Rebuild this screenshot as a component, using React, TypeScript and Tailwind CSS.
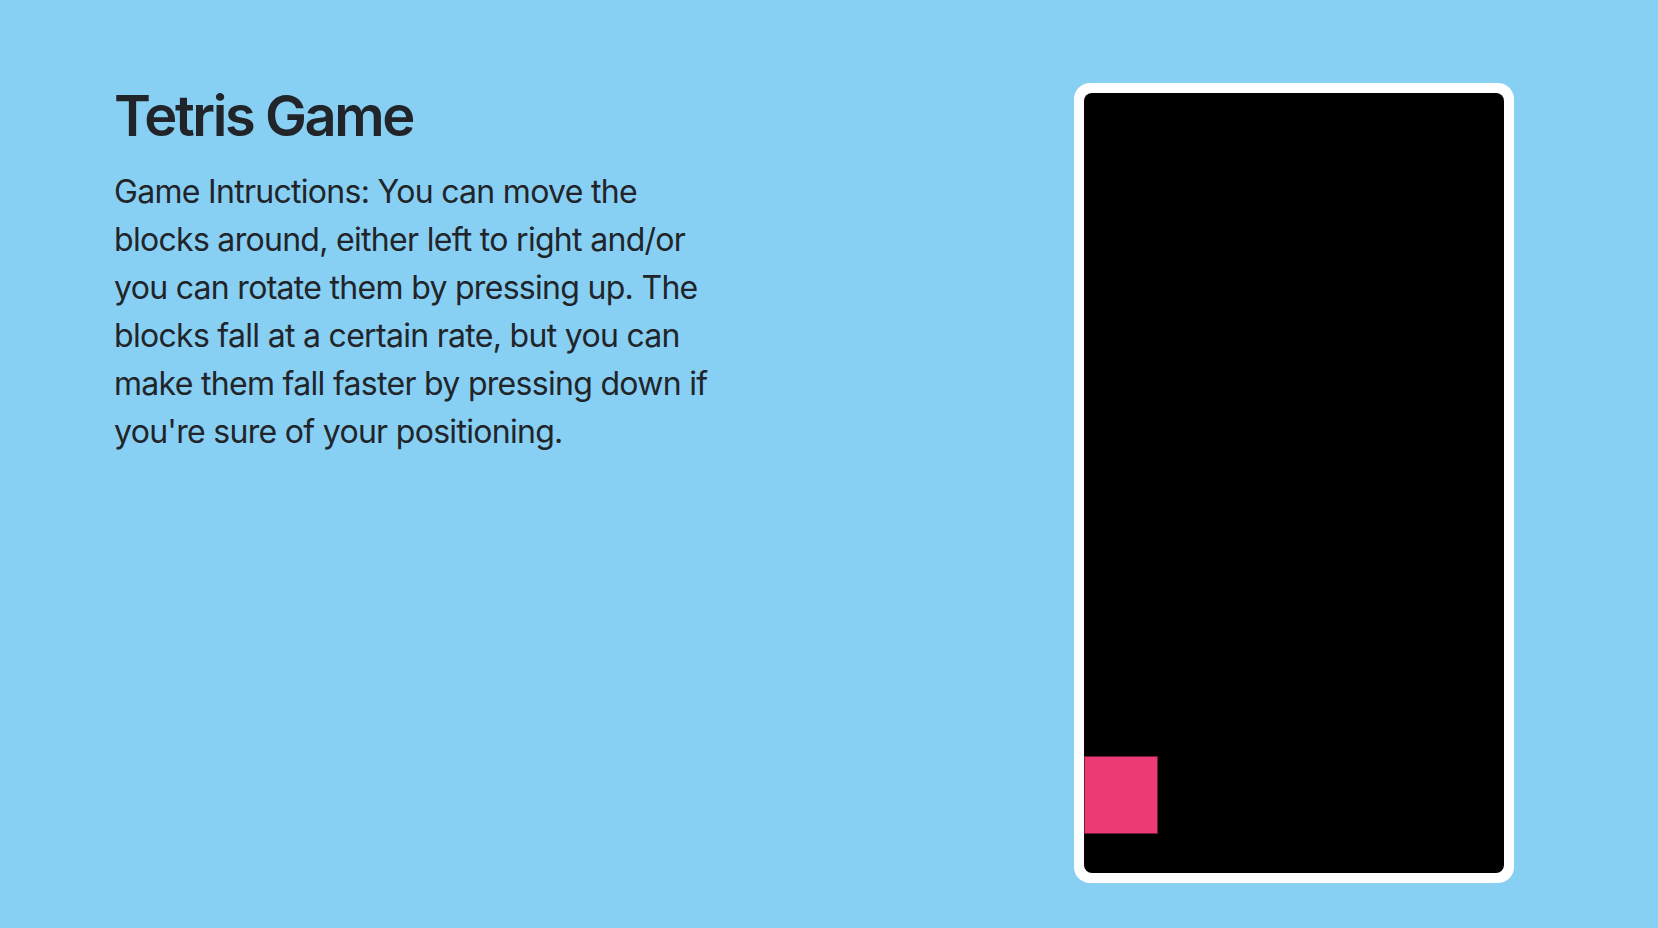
import React from 'react';

const Board = () => {
  return (
    <div className="rounded-2xl bg-white p-[10px]">
      <div className="relative h-[780px] w-[420px] overflow-hidden rounded-lg bg-black">
        {/* falling piece */}
        <div className="absolute left-0 top-[663px] h-[78px] w-[74px] border border-[#7a1d3d] bg-[#ec3a75]" />
      </div>
    </div>
  );
};

export default function App() {
  return (
    <div
      className="flex min-h-screen justify-between bg-[#88cff4] pl-[114px] pr-[144px] pt-[83px] text-[#212529]"
      style={{ fontFamily: 'Inter, "Noto Sans", sans-serif' }}
    >
      <div className="w-[600px]">
        <h1 className="mb-[18px] text-[56px] font-semibold leading-[1.2] tracking-[-2.4px]">Tetris Game</h1>
        <p className="text-[32px] leading-[48px] tracking-[-0.7px]">
          Game Intructions: You can move the blocks around, either left to right and/or you can rotate them by
          pressing up. The blocks fall at a certain rate, but you can make them fall faster by pressing down if
          you're sure of your positioning.
        </p>
      </div>
      <div>
        <Board />
      </div>
    </div>
  );
}
